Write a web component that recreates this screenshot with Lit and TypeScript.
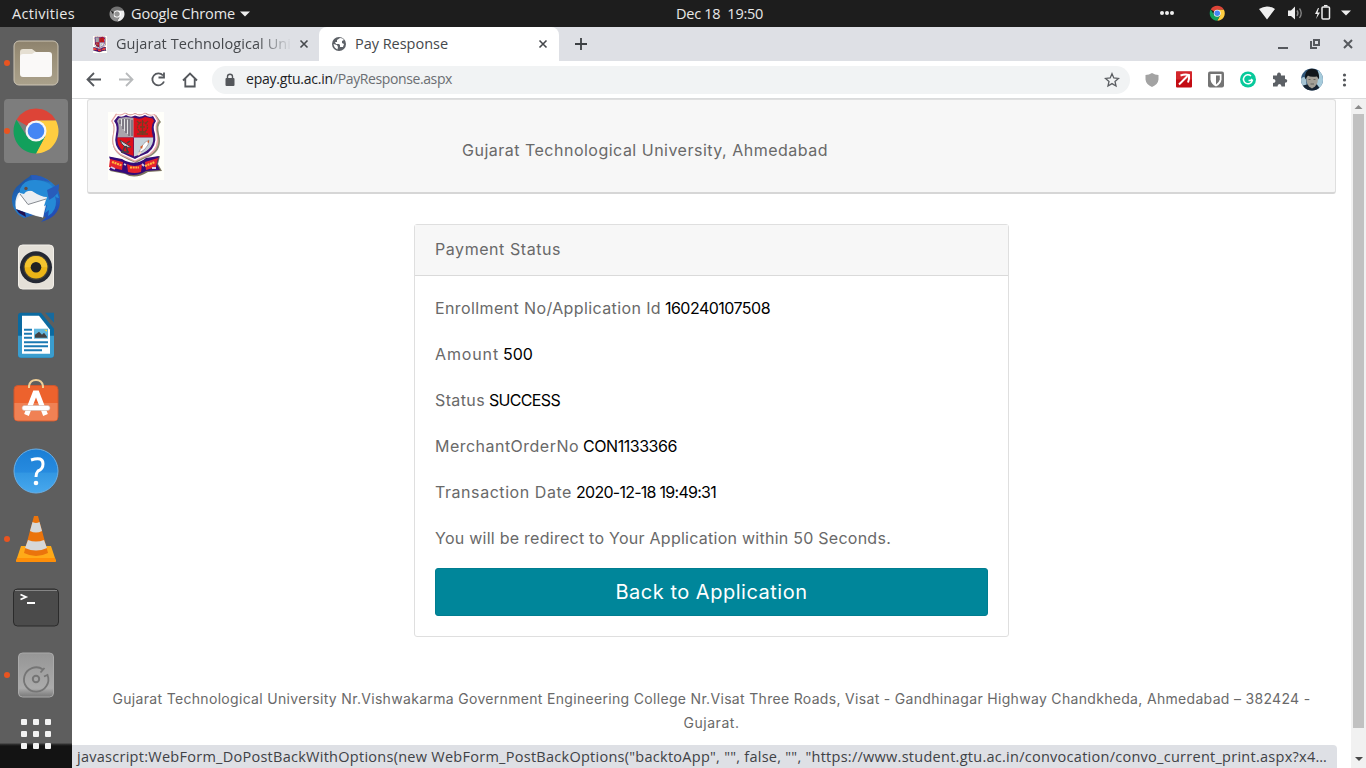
import { LitElement, html, css, svg } from "lit";
import { customElement, property } from "lit/decorators.js";

/** Single line of text tracked so that it fills a given width. */
@customElement("fit-text")
class FitText extends LitElement {
  @property() text = "";
  @property({ type: Number }) w = 0;
  static styles = css`
    :host { display: inline-block; white-space: pre; flex: none; }
  `;
  firstUpdated() {
    const span = this.renderRoot.querySelector("span") as HTMLElement;
    const natural = span.getBoundingClientRect().width;
    this.style.letterSpacing = `${(this.w - natural) / this.text.length}px`;
    this.style.width = `${this.w}px`;
  }
  render() {
    return html`<span>${this.text}</span>`;
  }
}

const fit = (text: string, w: number, cls = "") =>
  html`<fit-text class=${cls} .text=${text} .w=${w}></fit-text>`;

const chromeMark = svg`
  <path d="M24 24 4.500 12.800A22.500 22.500 0 0 1 43.500 12.800L44 13.500H24Z" fill="#dd4437"/>
  <path d="M24 13.500H43.900A22.500 22.500 0 0 1 24 46.500L33.200 29.300Z" fill="#ffcd40"/>
  <path d="M4.500 12.800A22.500 22.500 0 0 0 24 46.500L33.200 29.300 24 34 14.800 29.300Z" fill="#12a05c"/>
  <circle cx="24" cy="24" r="10.500" fill="#f5f5f5"/><circle cx="24" cy="24" r="8.300" fill="#4486f4"/>`;

const crest = svg`
  <rect width="56" height="68" fill="#fffffa"/>
  <path d="M8 2Q13 5 18 1Q23 4 27 1Q32 4 38 1Q42 4 48 3L53 10Q49 13 51 22Q55 37 43 44Q34 47 28 51Q20 48 13 44Q2 37 5 22Q7 14 4 10Z" fill="#8b8970"/>
  <path d="M8 1.500Q12 4 17 .500Q22 4 27 1Q32 4 37 .500Q41 4 47 2L51 9Q47 13 49.500 22Q53 36 42 43Q33 46 27 50Q19 46 12 43Q2 36 5 22Q7 14 3 9Z" fill="#e8a8a8"/>
  <path d="M9 2.500Q13 5 17 1.500Q22 5 27 2Q32 5 37 1.500Q41 5 46 3L49.500 9Q46 13 48.500 22Q51 35 41 42Q33 45 27 48.500Q20 45 13 42Q3 35 6 22Q8 14 4.500 9Z" fill="#fff"/>
  <path d="M10 4Q14 6 18 3Q23 6 27 3.500Q32 6 37 3Q41 6 45 4L48 9Q44 14 47 22Q49 34 40 41Q32 44 27 47Q20 44 14 41Q5 34 8 22Q10 14 6 9Z" fill="#3b1278"/>
  <path d="M11 6 18 5 26 6V25.500H9.500Q12 14 9 9Z" fill="#aaa5ab"/>
  <path d="M25.500 5.500Q32 8 37 5L44.500 6.500 46 9Q42 14 45 25.500H25.500Z" fill="#dc101b"/>
  <path d="M9.500 25.500H25.500V44Q8 39 9.500 25.500Z" fill="#dc101b"/>
  <path d="M26 25.500H45.200Q46 39 26 44.500Z" fill="#c5d1d9"/>
  <path d="M12 8V12M15 7V17M18 7V21M21 7V24M24 8V24" stroke="#5c5766" stroke-width="1.100"/>
  <path d="M13.500 7V14M16.500 7V19M19.500 8V22" stroke="#e4e4e4" fill="none"/>
  <g fill="none" stroke="#713f24" stroke-width="1.300"><circle cx="34.500" cy="15" r="5" stroke-dasharray="2 .8"/><path d="M29 9 32 12M40 9 37 12M29 22H40M31 20H38M34.500 8V23M32 15H37"/></g>
  <path d="M12 28 23 35Q15 37 12 28Z" fill="#cfd0d6" stroke="#424146"/><path d="M17 34 14 41M18 34 20 41M13 40H21M19 31 22 29" stroke="#424146" stroke-width="1.500"/>
  <path d="M31 40 34 34Q37 29 41 28Q41 33 37 37L33 40Z" fill="#fff" stroke="#8a8a92" stroke-width=".7"/>
  <path d="M35 33 32 35 34 37ZM39 30 41 28 41 31Z" fill="#d75b2a"/><path d="M33 40 30 43" stroke="#f3d9c6" stroke-width="2"/>
  <path d="M2 45 15 48Q27 56 39 47L52 44 50 52 54 59 40 60Q27 68 17 62L2 59 5 53Z" fill="#7b725c"/>
  <path d="M1 44.500 14 47Q27 55 38 46L51 44 49 52 52 58 38 59Q27 66 16 61L1 58 4 53Z" fill="#350b79"/>
  <path d="M2 47 15 50 14 58 1 55ZM19 52Q27 56 34 52L33 60Q27 62 20 60ZM37 50 50 46 48 55 38 58Z" fill="#e5232d"/>
  <path d="M4 50 14 53.500M22 55.500H31M37 54 47 50" stroke="#ffb83d" stroke-width="2.200" stroke-dasharray="2 .7"/>
  <path d="M3 55 7 57M16 52 18 53M34 52 36 54M44 56 48 56" stroke="#d7cbe7" stroke-width="1.800"/>`;

const dock = [
  { dot: true, art: svg`
    <defs><linearGradient id="f" y2="1" x2="0"><stop stop-color="#8d826d"/><stop offset=".3" stop-color="#998e77"/><stop offset="1" stop-color="#aaa18b"/></linearGradient></defs>
    <rect x="2" y="2" width="44" height="44" rx="5" fill="url(#f)" stroke="#ccc4b4"/>
    <path d="M8 32V13Q8 10 11 10H20L24 13V20H8Z" fill="#e5dfd2"/>
    <path d="M8 18Q8 15 11 15H20L23 13H37Q40 13 40 16V35Q40 38 37 38H11Q8 38 8 35Z" fill="#faf9f8"/>` },
  { dot: true, active: true, art: chromeMark },
  { art: svg`
    <defs><linearGradient id="tb" x2=".8" y2="1"><stop stop-color="#1b3e91"/><stop offset=".5" stop-color="#237dc9"/><stop offset="1" stop-color="#2145b3"/></linearGradient></defs>
    <path d="M8 9Q13 4 17 2L19 0Q31 0 39 7Q49 14 48 27Q47 42 29 47L34 42 22 40 12 43Q6 40 5 38Q-1 31 0 22Q1 14 8 9Z" fill="url(#tb)"/>
    <path d="M6 18.500 10 16 35 14V26L31 42.500 24 41 4 34Q2 26 6 18.500Z" fill="#eceef1"/>
    <path d="M4 27 8 20 16 29.500 33 24 31 42.500 4 34Z" fill="#fff"/>
    <path d="M8 19 16 29.500 34 24" fill="none" stroke="#878b91"/>
    <path d="M8 14Q12 4 24 5Q42 6 47 23Q44 23 43 21Q46 31 40 38L36 41 37 35 33 38 35 30 32 31 35 22Q29 22 20 16Q15 15 12 19L8 18Z" fill="#258ad6"/>
    <path d="M19 0Q31 0 39 8Q31 4 20 5ZM35 15 47 9Q48 20 37 25Z" fill="#285cbb"/>
    <circle cx="14" cy="13.500" r="1.700" fill="#674c41"/>
    <path d="M4 34 13 37.500 14 42 7 38Z" fill="#211151"/>` },
  { art: svg`
    <rect x="6.500" y="2" width="35" height="44" rx="4" fill="#e4e0d8" stroke="#f2efe9"/>
    <circle cx="24" cy="24.300" r="16" fill="#242833"/><circle cx="24" cy="24.300" r="12.500" fill="#484537"/>
    <circle cx="24" cy="24.300" r="11.300" fill="#ecb517"/><path d="M12.700 24.300A11.300 11.300 0 0 1 35.300 24.300Z" fill="#f4c42f"/>
    <circle cx="24" cy="24.300" r="5.300" fill="#232323"/>` },
  { art: svg`
    <g transform="translate(0 .7)"><path d="M9 1H29L42 17V43Q42 46 39 46H9Q6 46 6 43V4Q6 1 9 1Z" fill="#0b6aa0"/>
    <path d="M6 24H42V43Q42 46 39 46H9Q6 46 6 43Z" fill="#3a9dce"/>
    <path d="M10 4H27L38 18V42H10Z" fill="#fff"/><path d="M33 1H42V11Z" fill="#176a9e"/>
    <path d="M12 18H20M12 22H20M12 26H20M12 30.500H36M12 34.500H36M12 38.500H30" stroke="#1b79b2" stroke-width="2"/>
    <path d="M22 17H36V27H22Z" fill="#63b9df"/><path d="M23 26V23L27 20 30 23 32 21 35 25V26Z" fill="#424242"/><path d="M32 18H35V20Z" fill="#ffd538"/></g>` },
  { art: svg`
    <rect x="2" y="6.500" width="44" height="35.500" rx="4" fill="#ed622d" stroke="#cc572e"/>
    <path d="M2.500 24H45.500V38Q45.500 41.500 43 41.500H5Q2.500 41.500 2.500 38Z" fill="#f08154"/>
    <path d="M17 9V7Q18 1 24 1T31 7V9" fill="none" stroke="#f0cf97" stroke-width="2"/>
    <path d="M14.500 36 23 14H25L33.500 36" fill="none" stroke="#fff" stroke-width="5"/>
    <rect x="10" y="26.500" width="28" height="5" rx="2.500" fill="#fff" stroke="#cdb4aa" stroke-width=".6"/>` },
  { art: svg`
    <defs><linearGradient id="h" x2="0" y2="1"><stop stop-color="#1b7ed5"/><stop offset=".53" stop-color="#278bdf"/><stop offset=".54" stop-color="#3297e3"/><stop offset="1" stop-color="#48a8ed"/></linearGradient></defs>
    <circle cx="24" cy="24" r="22" fill="url(#h)" stroke="#69aee5"/>
    <path d="M19 13Q31 9 31 17Q31 22 26 24Q24 26 24 30" fill="none" stroke="#fff" stroke-width="3"/><circle cx="24" cy="36" r="2.300" fill="#fff"/>` },
  { dot: true, art: svg`
    <path d="M9 31H39L44 46H4Z" fill="#ffaa18"/><path d="M5 43H43L44 47H4Z" fill="#ff8e08"/>
    <path d="M22 1H26L36 38Q24 44 12 38Z" fill="#eb740c"/>
    <path d="M20.500 7Q24 9 27.500 7L30 16Q24 19 18 16ZM16 25Q24 28 32 25L35 33Q24 38 13 33Z" fill="#d6d8d9"/>` },
  { art: svg`
    <rect x="1.500" y="6" width="45" height="37" rx="4" fill="#4b4b4b" stroke="#2b2b2b"/><path d="M3 7.500H45" stroke="#858585"/>
    <path d="M8.500 11.500 14 14 8.500 16.500M15 20H23" fill="none" stroke="#fff" stroke-width="1.800"/>` },
  { dot: true, art: svg`
    <defs><linearGradient id="d" x2="0" y2="1"><stop stop-color="#969696"/><stop offset=".8" stop-color="#ababab"/><stop offset="1" stop-color="#787878"/></linearGradient></defs>
    <rect x="6.500" y="2" width="35" height="44" rx="4" fill="url(#d)" stroke="#aaa"/>
    <path d="M31 18.400A12.200 12.200 0 1 0 35.500 24L32 25.500M28.500 21.500 32.500 17" fill="none" stroke="#757575" stroke-width="1.800"/>
    <circle cx="24" cy="28" r="3.200" fill="none" stroke="#757575" stroke-width="2"/>` },
];

const rows: [string, number, string, number][] = [
  ["Enrollment No/Application Id", 226, "160240107508", 105],
  ["Amount", 64, "500", 30],
  ["Status", 50, "SUCCESS", 71],
  ["MerchantOrderNo", 144, "CON1133366", 94],
  ["Transaction Date", 137, "2020-12-18 19:49:31", 140],
];

const icon = (cls: string, box: string, art: unknown) =>
  html`<svg class=${cls} viewBox=${box} aria-hidden="true">${art}</svg>`;

const cross = svg`<path d="M1.500 1.500 8.500 8.500M8.500 1.500 1.500 8.500" stroke="#45484c" stroke-width="1.600"/>`;

@customElement("app-root")
class AppRoot extends LitElement {
  static styles = css`
    :host { display: flex; flex-direction: column; width: 1366px; height: 768px; overflow: hidden; font: 14.500px "Open Sans", "Noto Sans", sans-serif; background: #fff; }
    * { box-sizing: border-box; }
    svg { display: block; flex: none; }
    .top { height: 27px; flex: none; background: #1d1d1d; color: #e8e8e8; display: grid; grid-template-columns: 676px 1fr auto; align-items: center; }
    .topleft { display: flex; align-items: center; padding-left: 12px; }
    .mini { width: 16px; height: 16px; margin: 0 6px 0 34px; filter: grayscale(1) brightness(1.150); }
    .caret { width: 10px; height: 6px; margin-left: 5px; }
    .tray { width: 207px; height: 27px; }
    .main { flex: 1; min-height: 0; display: flex; }
    .dock { width: 72px; flex: none; padding: 4px 4px 0; display: flex; flex-direction: column; gap: 4px; background: linear-gradient(#5e5e5e 0 716px, #343434 717px, #131313 719px); }
    .cell { height: 64px; flex: none; border-radius: 4px; display: grid; place-items: center; position: relative; }
    .active { background: #7d7d7d; }
    .art { width: 48px; height: 48px; overflow: visible; }
    .dot { position: absolute; left: 0; top: 29px; width: 6px; height: 6px; border-radius: 50%; background: #e95420; }
    .apps { display: grid; grid-template-columns: repeat(3, 6px); grid-auto-rows: 6px; gap: 6px; padding: 8px 0 0 17px; }
    .apps i { background: #f2f2f2; border-radius: 1px; }
    .win { flex: 1; min-width: 0; display: flex; flex-direction: column; position: relative; }
    .tabs { height: 34px; flex: none; display: flex; background: #dee0e5; color: #45484c; }
    .tab { display: flex; align-items: center; }
    .tab fit-text { margin-bottom: 2px; }
    .t1 { width: 247px; padding-left: 20px; border-radius: 0 0 8px 0; }
    .t2 { width: 240px; padding-left: 12px; background: #fff; border-radius: 8px 8px 0 0; }
    .fav { width: 16px; height: 17px; margin-right: 8px; }
    .globe { width: 16px; height: 16px; margin-right: 8px; }
    .clip { width: 176px; -webkit-mask: linear-gradient(90deg, #000 80%, transparent); }
    .x { width: 10px; height: 10px; }
    .t1 .x { margin-left: 7px; }
    .t2 .x { margin-left: 90px; }
    .plus { width: 12px; height: 12px; margin: 11px 0 0 16px; }
    .ctl { width: 90px; height: 34px; margin-left: auto; }
    .bar { height: 38px; flex: none; display: flex; align-items: center; border-bottom: 1px solid #dadbdc; }
    .nav { width: 140px; height: 37px; }
    .omni { width: 918px; height: 28px; border-radius: 14px; background: #f1f3f4; display: flex; align-items: center; color: #202124; padding: 0 10px 0 13px; font-size: 14px; }
    .omni fit-text { margin-bottom: 2px; }
    .lock { width: 10px; height: 14px; margin-right: 11px; }
    .path { color: #6b6e72; }
    .star { width: 16px; height: 16px; margin-left: auto; }
    .ext { width: 236px; height: 37px; }
    .view { flex: 1; min-height: 0; display: flex; color: #696969; font: 16px Inter, "Open Sans", sans-serif; }
    .page { flex: 1; padding: 0 15px; }
    .head { height: 95px; background: #f7f7f7; border: 1px solid #dfdfdf; border-bottom: 2px solid #d6d6d6; border-radius: 3px; padding: 12px 20px 0; display: flex; }
    .crest { width: 56px; height: 68px; }
    .title { margin: 27px 0 0 298px; line-height: 22px; }
    .card { width: 595px; height: 413px; margin: 30px 0 0 327px; border: 1px solid #dfdfdf; border-radius: 3px; }
    .cap { height: 51px; background: #f7f7f7; border-bottom: 1px solid #dadada; padding: 0 0 2px 20px; display: flex; align-items: center; }
    .body { padding: 9px 20px 0; }
    .row { height: 46px; display: flex; align-items: center; gap: 4px; }
    .val { color: #000; }
    .btn { width: 553px; height: 48px; margin-top: 7px; padding: 0; border: 1px solid #007d90; border-radius: 3px; background: #00869a; color: #fff; font: 20px Inter, sans-serif; display: flex; align-items: center; justify-content: center; }
    .foot { margin-top: 50px; font-size: 14px; line-height: 24px; display: flex; flex-direction: column; align-items: center; }
    .scroll { width: 15px; flex: none; background: #f1f1f1; display: flex; flex-direction: column; align-items: center; }
    .scroll svg { width: 15px; height: 15px; }
    .thumb { width: 11px; height: 614px; background: #c1c1c1; }
    .scroll .down { margin-top: auto; height: 17px; }
    .status { position: absolute; left: 0; bottom: 0; width: 1265px; height: 23px; background: #dee0e5; color: #404246; border-radius: 0 4px 0 0; padding-left: 5px; display: flex; align-items: center; font-size: 14.500px; }
  `;

  render() {
    return html`
      <div class="top">
        <div class="topleft">${fit("Activities", 63)}${icon("mini", "0 0 48 48", chromeMark)}${fit("Google Chrome", 104)}
          ${icon("caret", "0 0 10 6", svg`<path d="M0 .5H10L5 5.500Z" fill="#eee"/>`)}</div>
        ${fit("Dec 18  19:50", 87)}
        ${icon("tray", "1159 0 207 27", svg`
          <g fill="#eee"><circle cx="1162" cy="13" r="2"/><circle cx="1167" cy="13" r="2"/><circle cx="1172" cy="13" r="2"/>
          <path d="M1259 9Q1267 4 1275 9L1267 19.500ZM1288 10.500H1291L1295 6.500V19.500L1291 16H1288Z"/><path d="M1341 10.500H1351L1346 15.500Z"/>
          <path d="M1318 8 1315 14H1317.500L1316 19 1320 12.500H1317.500L1319 8Z"/></g>
          <path d="M1297 10.500Q1299 13 1297 16M1299.500 8.500Q1303 13 1299.500 18" fill="none" stroke="#888" stroke-width="1.300"/>
          <rect x="1322" y="7" width="7.500" height="12" rx="1" fill="none" stroke="#eee" stroke-width="1.500"/><path d="M1324 5.700H1327.500" stroke="#eee" stroke-width="1.500"/>
          <g transform="translate(1209.200 5.200) scale(.335)">${chromeMark}</g>`)}
      </div>
      <div class="main">
        <nav class="dock">
          ${dock.map((d) => html`<div class="cell ${d.active ? "active" : ""}">${icon("art", "0 0 48 48", d.art)}${d.dot ? html`<span class="dot"></span>` : ""}</div>`)}
          <div class="apps">${Array.from({ length: 9 }, () => html`<i></i>`)}</div>
        </nav>
        <div class="win">
          <div class="tabs">
            <div class="tab t1">${icon("fav", "0 0 56 68", crest)}<div class="clip">${fit("Gujarat Technological Uni", 175)}</div>${icon("x", "0 0 10 10", cross)}</div>
            <div class="tab t2">${icon("globe", "0 0 16 16", svg`<circle cx="8" cy="8" r="7" fill="#5d6167"/><path d="M9 2 6 4V6H4L5 8H8L9 9V11H12L13 8 11 7V5L13 4Q12 2 9 2ZM2.500 8 6 9 7 11 6.500 13.500Q3 12 2.500 8Z" fill="#fff"/>`)}
              ${fit("Pay Response", 93)}${icon("x", "0 0 10 10", cross)}</div>
            ${icon("plus", "0 0 12 12", svg`<path d="M0 6H12M6 0V12" stroke="#3c4043" stroke-width="1.800"/>`)}
            ${icon("ctl", "1276 27 90 34", svg`<g fill="none" stroke="#56595e" stroke-width="2"><path d="M1278 48H1288"/><path d="M1314 40H1319V45H1314Z"/><path d="M1311 41V48H1317M1344 40 1352 48M1352 40 1344 48"/></g>`)}
          </div>
          <div class="bar">
            ${icon("nav", "72 60.5 140 37", svg`<g fill="none" stroke="#55585d" stroke-width="1.800">
              <path d="M101 79H88M94 72.500 87.500 79 94 85.500"/><path d="M119 79H132M126 72.500 132.500 79 126 85.500" stroke="#b8babc"/>
              <path d="M163 75A6 6 0 1 0 164 81M164 72V77H158.500"/><path d="M183 80 190 73 197 80M185.300 78V86H194.700V78"/></g>`)}
            <div class="omni">${icon("lock", "0 0 10 14", svg`<rect x=".500" y="5" width="9" height="8" rx="1" fill="#54575b"/><path d="M2.500 6V3.500Q2.500 1.200 5 1.200T7.500 3.500V6" fill="none" stroke="#54575b" stroke-width="1.400"/>`)}
              ${fit("epay.gtu.ac.in", 87)}${fit("/PayResponse.aspx", 119, "path")}
              ${icon("star", "0 0 16 16", svg`<path d="M8 1.700 9.800 6 14.500 6.400 11 9.500 12 14 8 11.600 4 14 5 9.500 1.500 6.400 6.200 6Z" fill="none" stroke="#5a5d61" stroke-width="1.300"/>`)}</div>
            ${icon("ext", "1130 60.500 236 37", svg`
              <path d="M1152 72.500Q1155 74.500 1158.500 74.500V79Q1158 84 1152 86.500Q1146 84 1145.500 79V74.500Q1149 74.500 1152 72.500Z" fill="#a3a3a3"/>
              <rect x="1176" y="71" width="16" height="16" rx="1" fill="#c30b12"/><path d="M1176 71H1192V79H1176Z" fill="#d3262b"/><path d="M1179 84 1187.500 75.500M1180.500 75Q1185 73.500 1189 74.500Q1189.500 78 1188 82" stroke="#fff" stroke-width="2" fill="none"/>
              <rect x="1208" y="71" width="16" height="16" rx="2" fill="#747474"/><path d="M1210.500 73.500H1221.500V79Q1221 83.500 1216 86Q1211 83.500 1210.500 79Z" fill="#fff"/><path d="M1216 75H1219.800V79Q1219 82 1216 84Z" fill="#747474"/>
              <circle cx="1248" cy="79" r="8" fill="#08c99b"/><path d="M1251 75.500A4.500 4.500 0 1 0 1252.300 80H1248.500M1251 78.500 1252.500 80" fill="none" stroke="#fff" stroke-width="1.500"/>
              <path d="M1273 75H1277Q1277 72 1279 72T1281 75H1285V78.500Q1287.300 78.500 1287.300 80.300T1285 82.200V86H1281.500Q1281.500 83.500 1279.500 83.500T1277.500 86H1273V82.500Q1275.500 82.500 1275.500 80.500T1273 78.500Z" fill="#5c6065"/>
              <clipPath id="av"><circle cx="1312" cy="79" r="11"/></clipPath><g clip-path="url(#av)"><path d="M1300 67H1324V91H1300Z" fill="#31577a"/><path d="M1318 69H1324V91H1316Z" fill="#a6cbdc"/><path d="M1301 78Q1304 75 1306 78L1307 91H1300Z" fill="#a6c4d4"/><path d="M1303 85 1307 84 1317 84 1322 91H1302Z" fill="#172433"/><path d="M1307 75H1317.500Q1319 82 1315 86L1312 88 1309 86Q1305 81 1307 75Z" fill="#a3a097"/><path d="M1305 79Q1304 70 1311 68Q1320 68 1319 79L1317 76Q1310 77 1308 75Z" fill="#11171c"/><path d="M1308.500 79H1310.500M1313.500 79H1315.500M1310.500 83.500H1314" stroke="#5b5c58" stroke-width=".9"/></g>
              <g fill="#54575b"><circle cx="1344.500" cy="74.500" r="1.600"/><circle cx="1344.500" cy="79.500" r="1.600"/><circle cx="1344.500" cy="84.500" r="1.600"/></g>`)}
          </div>
          <div class="view">
            <div class="page">
              <div class="head">${icon("crest", "0 0 56 68", crest)}<div class="title">${fit("Gujarat Technological University, Ahmedabad", 366)}</div></div>
              <div class="card">
                <div class="cap">${fit("Payment Status", 126)}</div>
                <div class="body">
                  ${rows.map(([a, aw, b, bw]) => html`<div class="row">${fit(a, aw)}${fit(b, bw, "val")}</div>`)}
                  <div class="row">${fit("You will be redirect to Your Application within 50 Seconds.", 456)}</div>
                  <button class="btn">${fit("Back to Application", 192)}</button>
                </div>
              </div>
              <div class="foot">
                ${fit("Gujarat Technological University Nr.Vishwakarma Government Engineering College Nr.Visat Three Roads, Visat - Gandhinagar Highway Chandkheda, Ahmedabad – 382424 -", 1198)}
                ${fit("Gujarat.", 56)}
              </div>
            </div>
            <div class="scroll">
              ${icon("up", "0 0 15 15", svg`<path d="M3.500 10H11.500L7.500 6Z" fill="#8b8b8b"/>`)}
              <div class="thumb"></div>
              ${icon("down", "0 0 15 17", svg`<path d="M4 6H12L8 10Z" fill="#484848"/>`)}
            </div>
          </div>
          <div class="status">${fit('javascript:WebForm_DoPostBackWithOptions(new WebForm_PostBackOptions("backtoApp", "", false, "", "https://www.student.gtu.ac.in/convocation/convo_current_print.aspx?x4…', 1250)}</div>
        </div>
      </div>`;
  }
}
